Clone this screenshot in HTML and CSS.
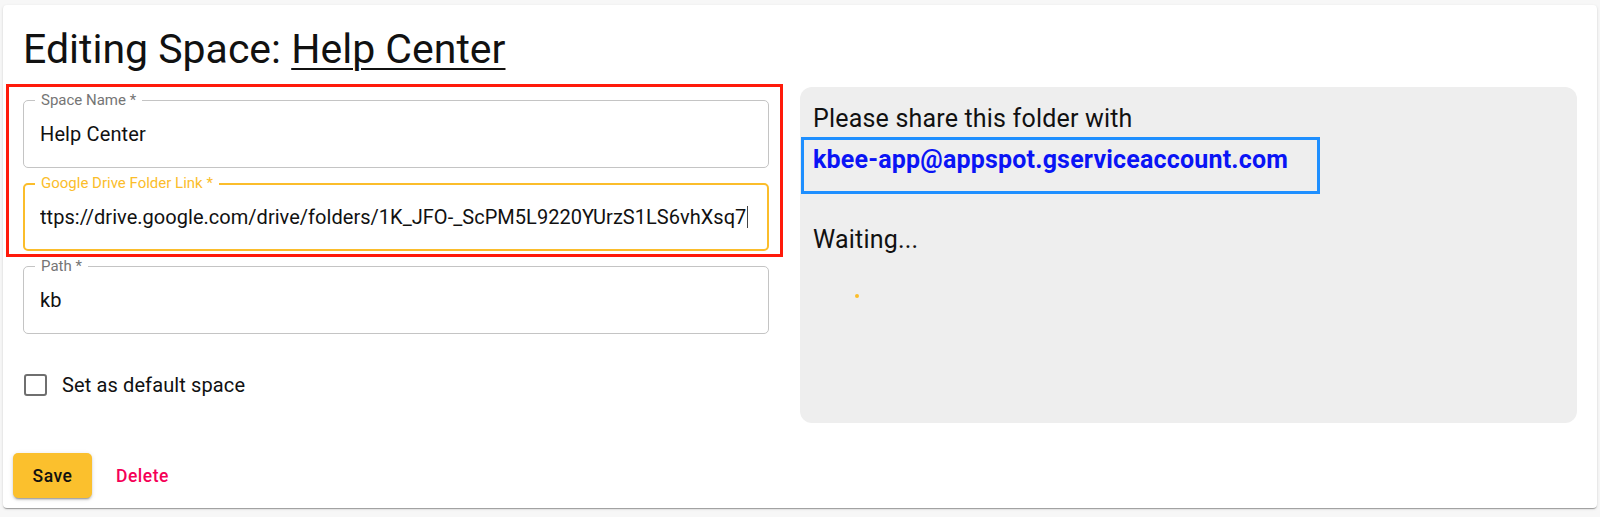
FILE: index.html
```html
<!DOCTYPE html>
<html lang="en">
<head>
<meta charset="utf-8">
<title>Editing Space: Help Center</title>
<link rel="stylesheet" href="styles.css">
</head>
<body>
<div class="card">
  <h1 class="title">Editing Space: <span class="title-link">Help Center</span></h1>
  <div class="content">
    <div class="form-col">
      <div class="highlight-red"></div>
      <div class="field">
        <span class="field-label">Space Name *</span>
        <div class="field-input">Help Center</div>
      </div>
      <div class="field field-focused">
        <span class="field-label">Google Drive Folder Link *</span>
        <div class="field-input field-scroll"><span class="scroll-text">https://drive.google.com/drive/folders/1K_JFO-_ScPM5L9220YUrzS1LS6vhXsq7</span><span class="caret"></span></div>
      </div>
      <div class="field">
        <span class="field-label">Path *</span>
        <div class="field-input">kb</div>
      </div>
      <label class="check-row">
        <span class="checkbox"></span>
        <span class="check-text">Set as default space</span>
      </label>
    </div>
    <div class="share-panel">
      <div class="panel-text">Please share this folder with</div>
      <div class="email-box">kbee-app@appspot.gserviceaccount.com</div>
      <div class="panel-text waiting">Waiting...</div>
      <div class="spinner"><span class="spinner-dot"></span></div>
    </div>
  </div>
  <div class="actions">
    <button class="btn btn-save">Save</button>
    <button class="btn btn-delete">Delete</button>
  </div>
</div>
</body>
</html>
```
FILE: styles.css
```css
* { box-sizing: border-box; }
html, body { margin: 0; padding: 0; }
body {
  background: #f7f7f7;
  font-family: Roboto, "Liberation Sans", Arial, sans-serif;
  color: rgba(0,0,0,0.87);
  width: 1600px;
  height: 517px;
  overflow: hidden;
}
.card {
  margin: 5px 3px 0 3px;
  height: 503px;
  background: #fff;
  border-radius: 4px;
  box-shadow: 0 2px 1px -1px rgba(0,0,0,0.2), 0 1px 1px 0 rgba(0,0,0,0.14), 0 1px 3px 0 rgba(0,0,0,0.12);
  display: flex;
  flex-direction: column;
}
.title {
  margin: 20px 20px 0 20px;
  font-size: 41px;
  font-weight: 400;
  line-height: 48px;
  color: #111;
  letter-spacing: 0;
}
.title-link { text-decoration: underline; text-decoration-thickness: 2px; text-underline-offset: 5px; }
.content {
  margin: 14px 20px 0 20px;
  display: grid;
  grid-template-columns: 746px 777px;
  column-gap: 31px;
}
.form-col {
  position: relative;
  padding-top: 13px;
  display: flex;
  flex-direction: column;
  gap: 15px;
}
.highlight-red {
  position: absolute;
  left: -17px;
  top: -3px;
  width: 777px;
  height: 173px;
  border: 3px solid #ff1a0a;
  pointer-events: none;
}
.field {
  position: relative;
  height: 68px;
  border: 1px solid #c4c4c4;
  border-radius: 5px;
  display: flex;
  align-items: center;
  padding-left: 16px;
  padding-right: 16px;
}
.field-label {
  position: absolute;
  top: -10px;
  left: 11px;
  padding: 0 6px;
  background: #fff;
  font-size: 15px;
  line-height: 18px;
  color: #757575;
}
.field-input {
  font-size: 20px;
  line-height: 24px;
  letter-spacing: 0.12px;
  color: #111;
  white-space: nowrap;
}
.field-focused {
  border: 2px solid #fbbd2b;
  padding-left: 15px;
  padding-right: 10px;
}
.field-focused .field-label { color: #fbbd2b; top: -11px; left: 10px; }
.field-scroll {
  flex: 1;
  min-width: 0;
  overflow: hidden;
  display: flex;
  align-items: center;
  letter-spacing: 0.03px;
}
.scroll-text { flex-shrink: 0; margin-left: -11px; }
.caret {
  flex-shrink: 0;
  display: inline-block;
  width: 1px;
  height: 22px;
  background: #444;
  margin-left: 1px;
}
.check-row {
  margin-top: 15px;
  height: 42px;
  display: flex;
  align-items: center;
  gap: 15px;
  font-size: 20px;
  letter-spacing: 0.12px;
  color: #111;
}
.checkbox {
  width: 23px;
  height: 22px;
  border: 2.5px solid #6f6f6f;
  border-radius: 3px;
  margin-left: 1px;
}
.share-panel {
  background: #eeeeee;
  border-radius: 12px;
  height: 336px;
  padding: 17px 13px 0 13px;
  display: flex;
  flex-direction: column;
  align-items: flex-start;
}
.panel-text {
  font-size: 25px;
  line-height: 30px;
  letter-spacing: 0.19px;
  color: #111;
}
.email-box {
  margin-top: 3px;
  margin-left: -12px;
  width: 519px;
  height: 57px;
  border: 3px solid #1e8fff;
  padding: 5px 0 0 9px;
  font-size: 25px;
  line-height: 30px;
  letter-spacing: 0.19px;
  font-weight: 700;
  color: #0a14f5;
}
.waiting { margin-top: 31px; }
.spinner {
  margin-top: 39px;
  margin-left: 42px;
  width: 4px;
  height: 4px;
}
.spinner-dot {
  display: block;
  width: 4px;
  height: 4px;
  border-radius: 50%;
  background: #fbbd2b;
}
.actions {
  margin-top: auto;
  padding: 0 10px 10px 10px;
  display: flex;
  align-items: center;
  gap: 10px;
}
.btn {
  font-family: Roboto, "Liberation Sans", Arial, sans-serif;
  font-size: 17.5px;
  font-weight: 500;
  letter-spacing: 0.5px;
  border: none;
  border-radius: 5px;
  height: 45px;
  cursor: pointer;
  background: transparent;
}
.btn-save {
  width: 79px;
  background: #fbc02d;
  color: #111;
  box-shadow: 0 3px 1px -2px rgba(0,0,0,0.2), 0 2px 2px 0 rgba(0,0,0,0.14), 0 1px 5px 0 rgba(0,0,0,0.12);
}
.btn-delete {
  color: #f50057;
  padding: 0 14px;
}
```
